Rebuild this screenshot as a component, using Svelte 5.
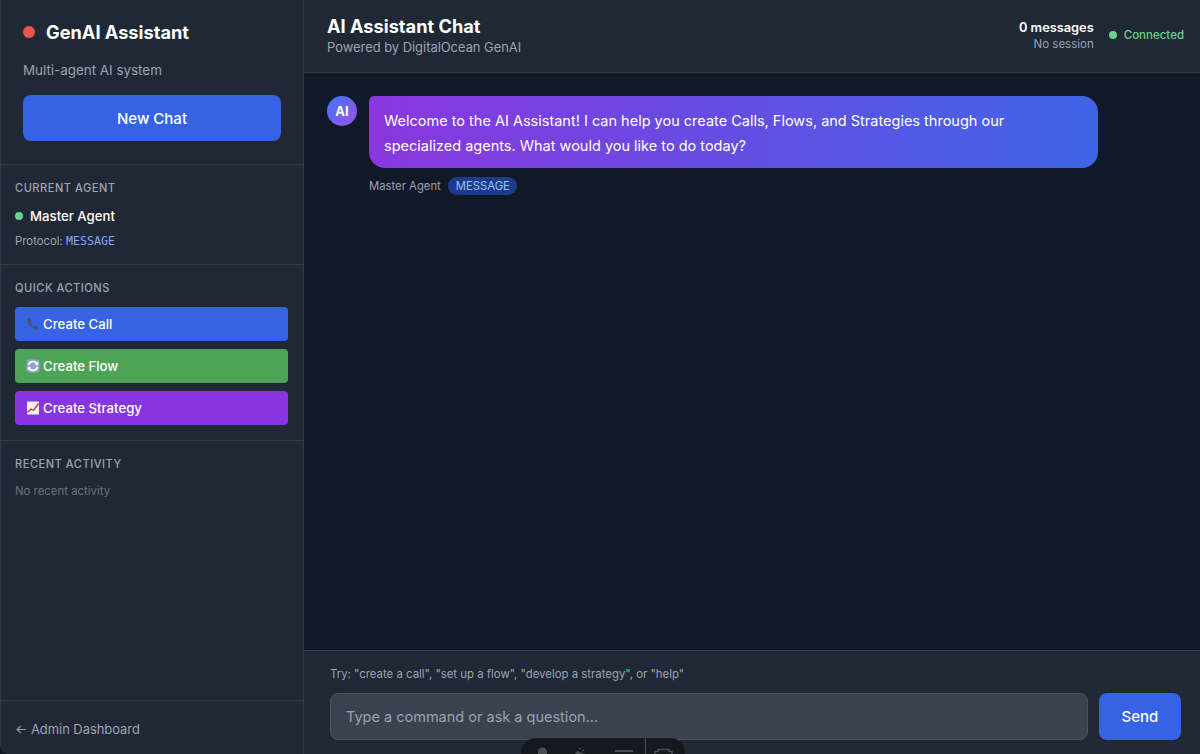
<script>
  const actions = [
    { label: 'Create Call', cls: 'call', icon: 'phone' },
    { label: 'Create Flow', cls: 'flow', icon: 'cycle' },
    { label: 'Create Strategy', cls: 'strategy', icon: 'chart' }
  ];
</script>

<div class="app">
  <aside class="sidebar">
    <div class="brand">
      <div class="title"><span class="red"></span><h1>GenAI Assistant</h1></div>
      <p class="sub">Multi-agent AI system</p>
      <button class="newchat">New Chat</button>
    </div>
    <section class="agent">
      <h3>CURRENT AGENT</h3>
      <div class="agentname"><span class="green small"></span>Master Agent</div>
      <div class="protocol">Protocol: <code>MESSAGE</code></div>
    </section>
    <section class="quick">
      <h3>QUICK ACTIONS</h3>
      <div class="actions">
        {#each actions as a}
          <button class="action {a.cls}">
            <svg class="emoji" viewBox="0 0 14 14" width="14" height="14">
              {#if a.icon === 'phone'}
                <path d="M1.5 1.5 C0.8 5 4 11 11 12.6 L12.6 10.6 L9.6 8.6 L8.4 9.7 C6.6 9 5 7 4.6 5.4 L5.7 4.2 L3.5 0.8 Z" fill="#4b5563"/>
              {:else if a.icon === 'cycle'}
                <rect x="0.5" y="0.5" width="13" height="13" rx="2" fill="#8fa3c9"/>
                <path d="M2.6 6 A4.5 4.5 0 0 1 11 5 M11.4 8 A4.5 4.5 0 0 1 3 9" fill="none" stroke="#fff" stroke-width="1.7"/>
                <path d="M12.2 2.8 L12.2 6.4 L8.8 5.6 Z M1.8 11.2 L1.8 7.6 L5.2 8.4 Z" fill="#fff"/>
              {:else}
                <rect x="1" y="0.5" width="12" height="13" fill="#f3f0f5"/>
                <path d="M1.5 11.5 L5 8 L7.5 9.5 L12.5 2.5" fill="none" stroke="#c0392b" stroke-width="1.3"/>
              {/if}
            </svg>
            <span>{a.label}</span>
          </button>
        {/each}
      </div>
    </section>
    <section class="recent">
      <h3>RECENT ACTIVITY</h3>
      <p>No recent activity</p>
    </section>
    <a class="admin" href="#admin">← Admin Dashboard</a>
  </aside>

  <main class="chat">
    <header class="top">
      <div class="heading">
        <h2>AI Assistant Chat</h2>
        <p>Powered by DigitalOcean GenAI</p>
      </div>
      <div class="status">
        <div class="counts"><strong>0 messages</strong><span>No session</span></div>
        <div class="conn"><span class="green"></span>Connected</div>
      </div>
    </header>

    <div class="messages">
      <div class="avatar">AI</div>
      <div class="msg">
        <div class="bubble">Welcome to the AI Assistant! I can help you create Calls, Flows, and Strategies through our specialized agents. What would you like to do today?</div>
        <div class="meta"><span>Master Agent</span><span class="tag">MESSAGE</span></div>
      </div>
    </div>

    <footer class="composer">
      <p class="hint">Try: "create a call", "set up a flow", "develop a strategy", or "help"</p>
      <div class="row">
        <input placeholder="Type a command or ask a question..." />
        <button class="send">Send</button>
      </div>
    </footer>
  </main>

  <div class="dock">
    <svg width="124" height="16" viewBox="0 0 124 16">
      <path d="M17 16 V14 A4.5 4.5 0 0 1 26 14 V16 Z" fill="#4a4d54"/>
      <path d="M54 16 L56 13 L64 16 Z" fill="#4a4d54"/>
      <path d="M58 11 L60 10 M61 13 L63 12" stroke="#4a4d54" stroke-width="1.2"/>
      <path d="M94 13 H112" stroke="#5a5d64" stroke-width="1.5"/>
    </svg>
    <i></i>
    <svg width="39" height="16" viewBox="0 0 39 16">
      <path d="M9 16 V13.5 H12 V11.5 H23 V13.5 H26 V16" fill="none" stroke="#4a4d54" stroke-width="1.5"/>
    </svg>
  </div>
</div>

<style>
  :global(body) {
    margin: 0;
    background: #111827;
    font-family: Inter, "Liberation Sans", sans-serif;
    overflow: hidden;
  }
  .app {
    position: relative;
    display: flex;
    width: 1200px;
    height: 754px;
    overflow: hidden;
    color: #fff;
  }
  .sidebar {
    width: 304px;
    flex: none;
    box-sizing: border-box;
    display: flex;
    flex-direction: column;
    background: #212835;
    border-right: 1px solid #343b48;
    border-left: 1px solid #343b48;
    border-bottom-left-radius: 10px;
  }
  .brand {
    padding: 20px 22px 23px;
    border-bottom: 1px solid #343b48;
  }
  .title { display: flex; align-items: center; gap: 11px; height: 24px; }
  .red { width: 12px; height: 12px; border-radius: 50%; background: #e8574e; }
  h1 { margin: 0; font-size: 18.2px; font-weight: 700; line-height: 24px; }
  .sub { margin: 16px 0 0; font-size: 13.4px; line-height: 20px; color: #9ca3af; }
  .newchat {
    display: block;
    width: 100%;
    height: 46px;
    margin-top: 15px;
    border: 0;
    border-radius: 8px;
    background: #3563e4;
    color: #fff;
    font: 500 15px Inter, sans-serif;
  }
  section { padding: 15px 15px 15px 14px; border-bottom: 1px solid #343b48; }
  h3 { margin: 0; font-size: 11.1px; line-height: 16px; font-weight: 500; letter-spacing: 0.5px; color: #9ca3af; }
  .agent { height: 100px; box-sizing: border-box; }
  .agentname { display: flex; align-items: center; gap: 7px; margin-top: 10px; font-size: 13.2px; font-weight: 500; line-height: 20px; }
  .green { display: block; width: 8px; height: 8px; border-radius: 50%; background: #68d391; }
  .small { width: 8px; height: 8px; }
  .protocol { margin-top: 6px; font-size: 11.35px; line-height: 18px; color: #9ca3af; }
  code { font: 11.6px "DejaVu Sans Mono", monospace; color: #7fa8f5; }
  .quick { height: 176px; box-sizing: border-box; }
  .actions { display: flex; flex-direction: column; gap: 8px; margin-top: 11px; }
  .action {
    display: flex;
    align-items: center;
    gap: 3px;
    height: 34px;
    padding: 0 11px 1px;
    border: 0;
    border-radius: 4px;
    color: #fff;
    font: 500 13.2px Inter, sans-serif;
  }
  .emoji { flex: none; }
  .call { background: #3563e4; }
  .flow { background: #4ea456; }
  .strategy { background: #8635e0; }
  .recent { flex: 1; }
  .recent p { margin: 11px 0 0; font-size: 11.4px; line-height: 16px; color: #6b7280; }
  .admin {
    height: 53px;
    padding: 3px 15px 0 14px;
    box-sizing: border-box;
    display: flex;
    align-items: center;
    font-size: 12.9px;
    color: #9ca3af;
    text-decoration: none;
  }
  .chat { flex: 1; min-width: 0; display: flex; flex-direction: column; }
  .top {
    height: 73px;
    flex: none;
    box-sizing: border-box;
    display: flex;
    justify-content: space-between;
    align-items: center;
    padding: 0 16px 0 23px;
    background: #212835;
    border-bottom: 1px solid #343b48;
  }
  .heading { margin-top: -2px; }
  h2 { margin: 0 0 2px; font-size: 18.2px; line-height: 22px; font-weight: 700; }
  .top p { margin: 0; font-size: 12.9px; line-height: 17px; color: #9ca3af; }
  .status { display: flex; align-items: center; gap: 15px; margin-top: -2px; }
  .counts { display: flex; flex-direction: column; align-items: flex-end; }
  .counts strong { font-size: 12.8px; line-height: 20px; font-weight: 600; }
  .counts span { font-size: 11.5px; line-height: 16px; margin-top: -2px; color: #9ca3af; }
  .conn { display: flex; align-items: center; gap: 7px; font-size: 11.5px; font-weight: 500; color: #68d391; }
  .messages {
    flex: 1;
    min-height: 0;
    display: flex;
    align-items: flex-start;
    gap: 12px;
    padding: 23px 23px;
    background: #111827;
  }
  .avatar {
    width: 30px;
    height: 30px;
    border-radius: 50%;
    flex: none;
    display: flex;
    align-items: center;
    justify-content: center;
    background: linear-gradient(135deg, #3f76ee, #9a50ee);
    font-size: 13px;
    font-weight: 700;
  }
  .msg { width: 729px; }
  .bubble {
    box-sizing: border-box;
    padding: 12px 15px 10px;
    border-radius: 16px;
    border-top-left-radius: 5px;
    background: linear-gradient(90deg, #8a36df, #3f65e6);
    font-size: 14.5px;
    line-height: 25px;
  }
  .meta { display: flex; align-items: center; gap: 7.5px; margin-top: 9px; font-size: 11.3px; color: #9ca3af; }
  .tag {
    padding: 1px 7.5px;
    border-radius: 10px;
    line-height: 16px;
    font-size: 11.3px;
    background: #1e3a8a;
    color: #93c5fd;
  }
  .composer {
    height: 104px;
    flex: none;
    box-sizing: border-box;
    padding: 15px 19px 0 26px;
    background: #212835;
    border-top: 1px solid #343b48;
  }
  .hint { margin: 0; font-size: 11.4px; line-height: 16px; color: #9ca3af; }
  .row { display: flex; gap: 11px; margin-top: 11px; }
  input {
    flex: 1;
    min-width: 0;
    height: 47px;
    box-sizing: border-box;
    padding: 0 15px;
    border: 1px solid #4b5161;
    border-radius: 8px;
    background: #3a414f;
    color: #fff;
    font: 14.5px Inter, sans-serif;
    outline: none;
  }
  input::placeholder { color: #9ca3af; opacity: 1; }
  .send {
    width: 82px;
    height: 47px;
    border: 0;
    border-radius: 8px;
    background: #3563e4;
    color: #fff;
    font: 500 15px Inter, sans-serif;
  }
  .dock {
    position: absolute;
    left: 521px;
    top: 738px;
    width: 164px;
    height: 30px;
    display: flex;
    border-radius: 17px;
    background: #16181d;
  }
  .dock svg { display: block; }
  .dock i { width: 1px; height: 16px; background: #4a4d54; }
</style>
